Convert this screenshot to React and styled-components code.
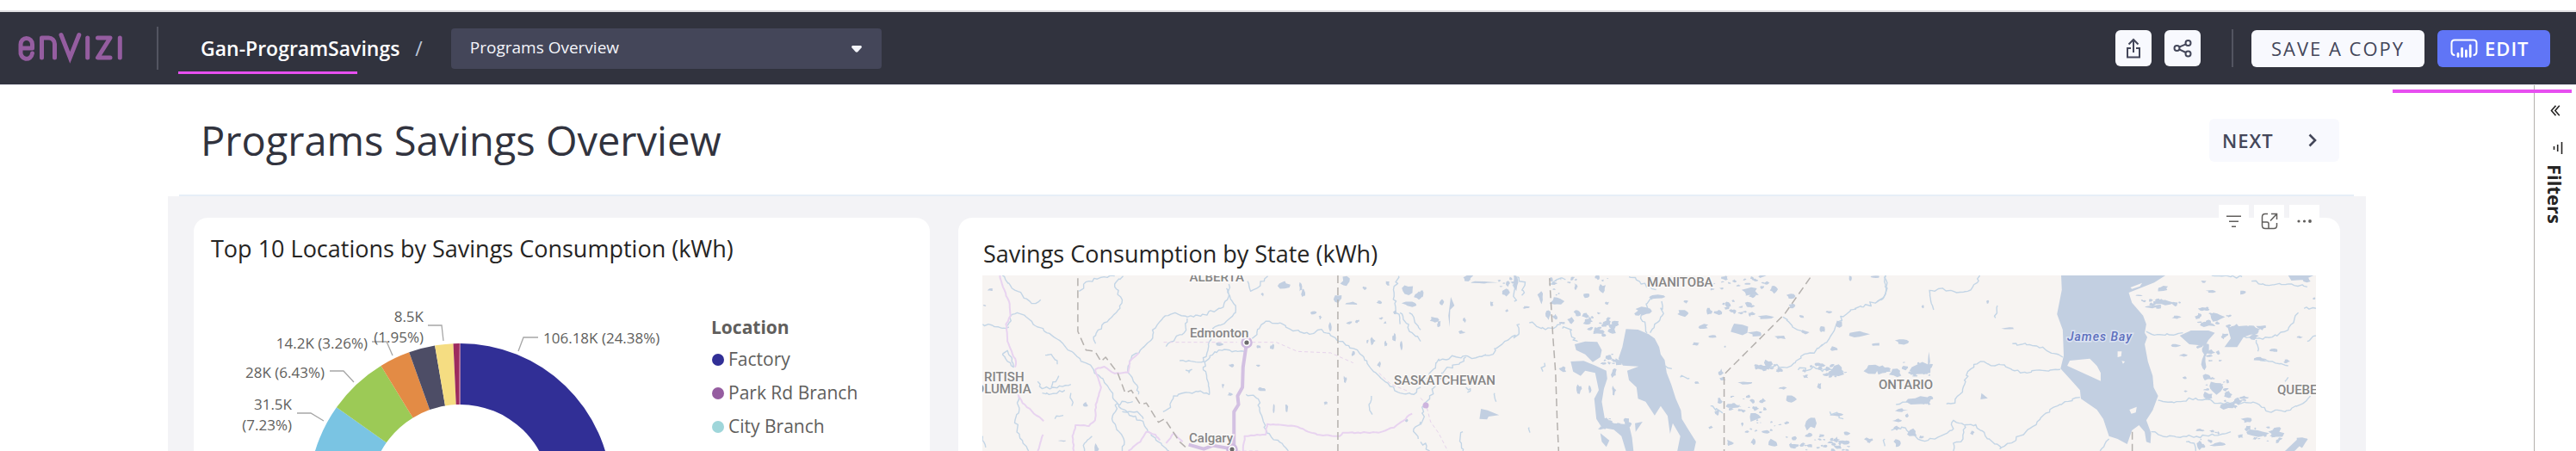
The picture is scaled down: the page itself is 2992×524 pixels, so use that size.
import React from "react";
import styled, { createGlobalStyle } from "styled-components";

const GlobalStyle = createGlobalStyle`
  *, *::before, *::after { box-sizing: border-box; }
  body { margin: 0; background: #fff; font-family: "Open Sans", "Noto Sans", sans-serif; }
  button, select { font-family: inherit; }
  h1, h2, h3, ul { margin: 0; padding: 0; font-weight: 400; }
`;

/* ---------- shell ---------- */

const Page = styled.div`
  height: 100vh;
  display: flex;
  flex-direction: column;
  overflow: hidden;
  padding-top: 12px;
`;

const Header = styled.header`
  position: relative;
  flex: none;
  display: flex;
  align-items: center;
  height: 87px;
  padding: 0 30px 0 20px;
  background: #31333e;
  border-top: 2px solid #e0e0e2;
  border-bottom: 1px solid #dcdde6;
`;

const Highlight = styled.span`
  position: absolute;
  height: 4px;
  background: #e74ff0;
  pointer-events: none;
`;

const TitleHighlight = styled(Highlight)`
  left: 207px;
  bottom: 12px;
  width: 208px;
  height: 3px;
`;

const PaneHighlight = styled(Highlight)`
  top: 5px;
  right: 5px;
  width: 208px;
`;

const Separator = styled.span`
  width: 2px;
  height: ${(p) => p.$height}px;
  background: #535561;
`;

const Crumbs = styled.nav`
  display: flex;
  align-items: center;
  gap: 18px;
  margin: 0 33px 0 49px;
  font-size: 23px;
  font-weight: 600;
  line-height: 32px;
`;

const CrumbLink = styled.a`
  color: #fff;
  text-decoration: none;
`;

const Slash = styled.span`
  color: #bcc5d8;
  font-weight: 400;
`;

const LogoBox = styled.a`
  display: flex;
  margin-right: 38px;
`;

const PickerBox = styled.div`
  position: relative;
  width: 500px;
`;

const Picker = styled.select`
  appearance: none;
  width: 100%;
  height: 47px;
  padding: 0 40px 2px 22px;
  border: 0;
  border-radius: 4px;
  background: #444659;
  color: #f4f5fb;
  font-size: 19px;
`;

const PickerCaret = styled.svg`
  position: absolute;
  right: 23px;
  top: 20px;
  pointer-events: none;
`;

const Actions = styled.div`
  display: flex;
  align-items: center;
  gap: 15px;
  margin-left: auto;
`;

const ActionDivider = styled.div`
  display: flex;
  padding: 0 6px 0 21px;
`;

const Button = styled.button`
  display: flex;
  align-items: center;
  justify-content: center;
  padding: 0;
  border: 0;
  border-radius: 6px;
  background: #f8f9fe;
  color: #44475a;
  font-size: 22px;
  letter-spacing: 1px;
`;

const IconButton = styled(Button)`
  width: 42px;
  height: 42px;
`;

const SaveButton = styled(Button)`
  width: 201px;
  height: 43px;
  font-weight: 500;
  letter-spacing: 2px;
`;

const EditButton = styled(Button)`
  justify-content: flex-start;
  gap: 8px;
  width: 131px;
  height: 43px;
  padding-left: 15px;
  background: #6075f6;
  color: #fff;
  font-weight: 600;
`;

const Workspace = styled.div`
  position: relative;
  flex: 1;
  min-height: 0;
  display: flex;
`;

const Report = styled.main`
  flex: 1;
  min-width: 0;
  display: flex;
  flex-direction: column;
  margin: 0 195px;
`;

const TitleRow = styled.div`
  flex: none;
  display: flex;
  align-items: center;
  justify-content: space-between;
  height: 129px;
  margin: 0 14px 0 13px;
  padding: 0 17px 0 25px;
  border-bottom: 2px solid #e6eef7;
`;

const PageTitle = styled.h1`
  color: #31333e;
  font-size: 47px;
  line-height: 64px;
`;

const NextButton = styled(Button)`
  justify-content: space-between;
  width: 151px;
  height: 50px;
  padding: 0 26px 0 15px;
  font-weight: 600;
`;

const Board = styled.div`
  flex: 1;
  min-height: 0;
  display: grid;
  grid-template-columns: minmax(0, 855fr) minmax(0, 1605fr);
  gap: 33px;
  padding: 25px 30px 0;
  background: #f3f3f6;
`;

const Card = styled.section`
  position: relative;
  display: flex;
  flex-direction: column;
  min-height: 0;
  background: #fff;
  border-radius: 16px 16px 0 0;
`;

const CardTitle = styled.h2`
  padding: ${(p) => (p.$low ? "24px 29px 7px" : "18px 20px 13px")};
  color: #252423;
  font-size: 27px;
  line-height: 36px;
`;

const ChartBody = styled.div`
  flex: 1;
  min-height: 0;
  display: flex;
  overflow: hidden;
`;

const Donut = styled.svg`
  flex: none;
  width: 601px;
  height: 450px;
  font-size: 17px;
  fill: #605e5c;
`;

const Legend = styled.div`
  padding-top: 42px;
  color: #605e5c;
  font-size: 21px;
`;

const LegendTitle = styled.h3`
  font-size: 21px;
  font-weight: 700;
  line-height: 36px;
`;

const LegendItem = styled.li`
  display: flex;
  align-items: center;
  gap: 5px;
  line-height: 39px;
`;

const Dot = styled.span`
  width: 14px;
  height: 14px;
  margin-left: 1px;
  border-radius: 50%;
  background: ${(p) => p.$color};
`;

const VisualTools = styled.div`
  position: absolute;
  top: -15px;
  right: 24px;
  display: flex;
  gap: 6px;
`;

const VisualTool = styled.button`
  display: flex;
  align-items: center;
  justify-content: center;
  width: 35px;
  height: 37px;
  padding: 0;
  border: 0;
  background: #fff;
  color: #605e5c;
`;

const MapFrame = styled.div`
  flex: 1;
  min-height: 0;
  margin: 0 28px;
  overflow: hidden;
  background: #f7f4f2;
`;

const MapSvg = styled.svg`
  display: block;
  width: 100%;
  height: 100%;
  font-family: Roboto, sans-serif;
  font-size: 15px;
  font-weight: 500;
`;

const FilterPane = styled.aside`
  display: flex;
  flex-direction: column;
  align-items: center;
  width: 49px;
  padding-top: 16px;
  border-left: 1px solid #b3b0ad;
  color: #252423;
`;

const PaneButton = styled.button`
  display: flex;
  justify-content: center;
  padding: 7px 0;
  border: 0;
  background: none;
  color: inherit;
`;

const PaneIcon = styled.div`
  display: flex;
  padding: 23px 0 12px 6px;
`;

const PaneTitle = styled.h2`
  writing-mode: vertical-rl;
  font-size: 22px;
  font-weight: 700;
  line-height: 30px;
`;

/* ---------- icons ---------- */

const Logo = () => (
  <svg width="124" height="38" viewBox="0 0 124 38" fill="none" stroke="#955da0" strokeWidth="5" strokeLinecap="round" role="img" aria-label="envizi">
    <path d="M4 19H17.5V14.5a6.75 7 0 0 0-13.5 0V22.5a6.75 7.5 0 0 0 13.5 2.5" strokeLinejoin="round" />
    <path d="M28.5 30V7H36.5a7 7 0 0 1 7 7V30" strokeLinejoin="round" />
    <path d="M51 3.500L61.300 30L71.800 3.500" strokeMiterlimit="8" />
    <path d="M81.700 7V30M119.300 7V30" />
    <path d="M93.500 7H108L93.500 30H108" strokeLinejoin="round" />
  </svg>
);

const ExportIcon = () => (
  <svg width="16" height="24" viewBox="0 0 16 24" fill="none" stroke="currentColor" strokeWidth="2">
    <path d="M8 17V2M2.500 7.500L8 2l5.500 5.500M5 12H1v10.500h14V12h-4" />
  </svg>
);

const ShareIcon = () => (
  <svg width="22" height="22" viewBox="0 0 22 22" fill="none" stroke="currentColor" strokeWidth="2">
    <circle cx="4.500" cy="11" r="3" />
    <circle cx="17.500" cy="5" r="3" />
    <circle cx="17.500" cy="17.500" r="3" />
    <path d="M7.200 9.700L14.800 6.300M7.200 12.300L14.800 16" />
  </svg>
);

const ReportIcon = () => (
  <svg width="32" height="24" viewBox="0 0 32 24" fill="none" stroke="currentColor" strokeLinecap="round">
    <path strokeWidth="2" d="M4.500 20Q1.500 19.500 1.500 16V6Q1.500 2.500 5 2.500H27Q30.500 2.500 30.500 6V16Q30.500 19.500 27.500 20" />
    <path strokeWidth="2.800" d="M9 18.500V21.500M13.600 12.500V21.500M18.400 15V21.500M23.200 9V21.500" />
  </svg>
);

const ChevronIcon = () => (
  <svg width="10" height="16" viewBox="0 0 10 16" fill="none" stroke="currentColor" strokeWidth="2.600">
    <path d="M1.500 1.500L8 8L1.500 14.500" />
  </svg>
);

const FilterLinesIcon = () => (
  <svg width="19" height="14" viewBox="0 0 19 14" stroke="currentColor" strokeWidth="1.500">
    <path d="M1 1.200H18M4 7.200H15M7 13.200H12" />
  </svg>
);

const FocusIcon = () => (
  <svg width="20" height="20" viewBox="0 0 20 20" fill="none" stroke="currentColor" strokeWidth="1.500">
    <path d="M8 1.500H5Q1.500 1.500 1.500 5V15Q1.500 18.500 5 18.500H15Q18.500 18.500 18.500 15V12M1.500 11H7Q9 11 9 13V18.500M11 9.500L18 2M12 1.500H18.500V8" />
  </svg>
);

const DotsIcon = () => (
  <svg width="17" height="4" viewBox="0 0 17 4" fill="currentColor">
    <circle cx="2" cy="2" r="1.600" />
    <circle cx="8.500" cy="2" r="1.600" />
    <circle cx="15" cy="2" r="1.900" />
  </svg>
);

const CollapseIcon = () => (
  <svg width="12" height="13" viewBox="0 0 12 13" fill="none" stroke="currentColor" strokeWidth="1.600">
    <path d="M6.500 .8L1.500 6.500L6.500 12.200M10.800 .8L5.800 6.500L10.800 12.200" />
  </svg>
);

const SideFilterIcon = () => (
  <svg width="12" height="14" viewBox="0 0 12 14" stroke="currentColor" strokeWidth="1.600">
    <path d="M1.500 5V9M5.700 3V11M10.500 0V14" />
  </svg>
);

/* ---------- donut ---------- */

const SLICES = [
  [0, 87.8, "#312f96"],
  [87.8, 180, "#955da0"],
  [180, 280.5, "#9fd6da"],
  [280.5, 305.3, "#7ac4e3"],
  [305.3, 328.5, "#9cca56"],
  [328.5, 340.3, "#e38b45"],
  [340.3, 350.4, "#4d4d66"],
  [350.4, 357.4, "#f5dd82"],
  [357.4, 359.5, "#9d2b5e"],
  [359.5, 360, "#b25080"],
];

const arc = (from, to) => {
  const pt = (deg, r) => {
    const a = ((deg - 90) * Math.PI) / 180;
    return `${(309.5 + r * Math.cos(a)).toFixed(1)} ${(255 + r * Math.sin(a)).toFixed(1)}`;
  };
  return `M${pt(from, 176)}A176 176 0 0 1 ${pt(to, 176)}L${pt(to, 105)}A105 105 0 0 0 ${pt(from, 105)}Z`;
};

const CALLOUTS = [
  ["8.5K", 267, 54, "end"],
  ["(1.95%)", 267, 78, "end"],
  ["14.2K (3.26%)", 202, 85, "end"],
  ["28K (6.43%)", 152, 119, "end"],
  ["31.5K", 114, 156, "end"],
  ["(7.23%)", 114, 180, "end"],
  ["106.18K (24.38%)", 406, 79, "start"],
];

const LEADERS =
  "M272 58H288L290 76M207 77H224L231 93M158 111H174L186 124M120 160H136L151 169M400 72H383L377 88";

/* ---------- map ---------- */

const random = (seed) => () => {
  seed = (seed * 16807) % 2147483647;
  return seed / 2147483647;
};

const blob = (x, y, w, h, rnd) => {
  const n = 9;
  let d = "";
  for (let i = 0; i < n; i++) {
    const a = (i / n) * Math.PI * 2;
    const r = 0.45 + rnd() * 0.75;
    d += `${i ? "L" : "M"}${(x + (Math.cos(a) * w * r) / 2).toFixed(1)} ${(y + (Math.sin(a) * h * r) / 2).toFixed(1)}`;
  }
  return d + "Z";
};

const lakes = (list, seed) => {
  const rnd = random(seed);
  return list.map(([x, y, w, h]) => blob(x, y, w, h, rnd)).join("");
};

const scatter = (areas, seed) => {
  const rnd = random(seed);
  let d = "";
  areas.forEach(([x, y, w, h, count, size]) => {
    for (let i = 0; i < count; i++) {
      const s = size * (0.4 + rnd());
      d += blob(x + rnd() * w, y + rnd() * h, s, s * (0.4 + rnd() * 0.6), rnd);
    }
  });
  return d;
};

const wiggle = (points, seed, amount = 5) => {
  const rnd = random(seed);
  return points
    .map((line) => {
      const p = line.split(" ").map((s) => s.split(",").map(Number));
      let d = `M${p[0]}`;
      for (let i = 1; i < p.length; i++) {
        const [ax, ay] = p[i - 1];
        const [bx, by] = p[i];
        const steps = Math.max(1, Math.round(Math.hypot(bx - ax, by - ay) / 10));
        for (let k = 1; k <= steps; k++) {
          const j = k === steps ? 0 : amount;
          const t = k / steps;
          d += `L${(ax + (bx - ax) * t + (rnd() - 0.5) * 2 * j).toFixed(1)} ${(ay + (by - ay) * t + (rnd() - 0.5) * 2 * j).toFixed(1)}`;
        }
      }
      return d;
    })
    .join("");
};

const WEST = {
  transform: "translate(-41 -100) scale(.3508 .3333)",
  rivers: wiggle([
    "118,470 150,474 185,484 205,480",
    "200,475 215,436 232,430 262,445 290,474 330,500 365,522 400,560 440,590 485,628 520,670 560,740 600,780 640,805 665,845 700,880 735,912",
    "183,300 215,345 250,370 280,398 310,385",
    "437,355 470,320 520,305 555,302",
    "583,302 555,330 565,365 580,385 560,430 520,465 500,490 485,515 492,538",
    "933,330 928,385 905,415 840,442 795,445 755,430 715,448 680,490 676,525 640,560 612,580 600,640 632,690 634,715",
    "925,345 950,400 955,430 925,460 880,485 865,540 850,600 770,597",
    "795,450 785,500 755,520 725,548",
    "985,565 900,560 870,580 848,620 862,665 868,715 830,705 790,708 750,720 740,760 715,775",
    "1010,520 1055,460 1100,466 1140,490 1200,505 1240,488 1290,525 1330,545 1380,585 1400,620 1450,670 1500,710 1545,715 1568,690",
    "990,715 1030,730 1045,800 1060,850 1100,880 1130,912",
    "237,720 237,780 225,805 240,860 270,912",
    "565,745 548,790 560,830 585,870 580,912",
    "1062,302 1050,320 1005,355 995,320",
    "1495,302 1480,360 1485,410 1500,470",
    "183,575 200,562 215,590 220,620 200,600 183,575",
    "325,578 345,575 365,610",
    "300,670 315,695 350,690 410,680",
    "315,710 350,712 390,700",
    "345,690 370,650",
    "410,710 413,755",
    "565,750 590,740 615,740",
    "580,775 630,775 650,800",
    "357,800 362,790 385,788",
    "1405,720 1397,750 1408,785",
    "1500,430 1540,500 1568,530",
    "1530,430 1568,490",
    "1568,810 1545,835 1560,870",
    "480,860 455,885 455,912",
    "118,860 128,900",
    "790,630 810,628 800,640",
  ], 7),
  lakes: lakes([
    [145,350,22,12],[125,405,14,6],[458,750,22,18],[383,877,30,6],[495,905,14,40],[1115,332,42,28],[1170,340,10,32],[1180,360,14,30],[1045,366,14,14],
    [1320,322,34,34],[1292,380,32,30],[1340,398,40,12],[1382,345,14,14],[1457,328,18,20],[1432,393,22,12],[1525,350,50,42],[1560,370,30,34],[1535,400,60,18],[1215,430,26,14],[1236,446,12,14],[1267,480,12,30],[1332,465,20,12],[1358,460,14,14],[1437,450,14,10],[1480,518,12,36],[1504,548,12,34],[1452,538,10,20],[1410,528,16,30],[1392,530,8,18],[1432,610,16,20],[1345,572,14,20],
    [1078,550,18,30],[1032,548,14,14],[900,540,28,12],[942,614,20,14],[1030,614,14,10],[1043,697,28,16],[937,715,18,16],[913,684,10,18],[1082,765,8,30],[1124,768,14,36],[1254,746,14,12],[1318,662,16,24],[1520,805,12,12],[1482,430,10,16],[1450,465,12,10],
  ], 11),
  roads: wiggle([
    "175,300 185,340 205,390 210,440 195,470 200,530 228,600 225,620",
    "235,715 250,745 320,808",
    "490,628 520,618 555,642 600,638 605,600 635,570",
    "490,628 510,690 492,750 490,805 470,825 425,822 415,860 420,912",
    "300,912 318,855",
    "600,912 640,880 660,845 690,855 705,875",
    "725,885 750,850 780,880",
    "980,912 985,860 1055,855 1060,818 1150,825 1225,855 1300,860 1310,848 1430,848 1480,830 1540,782",
  ], 23, 2),
  minorRoads: "M717 533H960M1010 533H1090L1160 565L1270 570L1345 605M1430 640L1470 680L1530 705M960 912H1030",
  highways: "M992 535L980 620L978 690L962 720L965 750L950 775V912M800 890L850 905L880 893L945 905",
  borders: "M433 310V495L460 560L490 565L510 600L525 585L565 640L590 710L610 700L640 750L660 745L700 812L720 800L770 880L800 908M1294 300V912",
};

const CENTRAL = {
  transform: "translate(509 -20) scale(.3508 .3333)",
  rivers: wiggle([
    "328,230 325,265 290,285 245,315 240,335 170,350 150,340 60,352 45,385 20,420",
    "150,345 130,365 90,380 70,400 50,445 30,480 15,510 5,540 5,570 0,580",
    "1540,60 1540,120 1520,145 1460,170 1410,195 1385,220 1365,260 1340,295 1290,330 1240,365 1200,380 1150,375",
    "470,245 500,250 505,285 520,290",
    "360,225 400,245 440,245 465,230",
    "798,150 800,200 775,230 760,260",
    "775,130 740,180 735,220 750,260",
    "1200,205 1230,235 1275,260",
    "310,60 310,150", "405,395 410,365", "245,470 250,500", "360,590 362,608", "140,605 135,645 140,672",
    "810,375 832,385", "860,415 890,418", "960,515 1000,540", "150,450 165,455 155,468",
    "0,640 20,655 30,672", "1355,535 1400,560", "1250,390 1310,385 1400,395",
    "425,90 450,75 480,75", "320,65 345,95 335,130", "780,110 730,90 690,65",
  ], 31, 8),
  lakes:
    "M680 247L720 249L755 265L775 280L790 310L795 335L808 355L815 400L830 440L845 490L862 530L865 560L885 595L912 640L905 672H850L860 620L835 575L826 612L818 550L795 515L775 548L745 500L720 490L715 450L690 425L684 392L722 377L670 374L655 350L668 310Z" +
    "M510 300L545 290L585 292L600 320L595 345L570 362L545 335L515 320Z" +
    "M497 360L540 358L580 375L615 392L618 420L607 455L600 500L610 560L640 575L690 580L700 625L705 672H680L665 620L640 598L600 590L582 560L575 490L590 460L578 400L545 392L530 410L505 395Z" +
    "M595 610L625 635L615 658L600 640Z M200 525L222 530L260 547L225 552L220 562L195 560Z M100 135L112 165L98 180L96 240L92 200Z M710 575L735 570L712 605Z" +
    lakes([
      [155,70,44,26],[205,85,90,10],[5,125,18,26],[70,152,16,22],[45,215,34,22],[60,228,14,26],[145,215,10,18],[135,258,24,16],[235,158,14,16],[285,183,10,10],[282,120,24,34],[315,85,20,50],[398,135,22,46],[450,150,44,40],[552,128,28,22],[602,105,24,30],[618,157,14,12],[515,100,14,20],[520,192,30,30],[498,218,24,26],[350,172,28,10],[422,198,22,34],[445,205,18,24],[470,388,28,22],[525,455,20,34],[560,460,10,36],[640,400,20,34],[640,460,14,32],[745,185,60,40],[720,190,30,20],[780,135,60,16],[878,152,20,14],[870,192,54,22],[955,185,22,26],[985,188,28,18],[935,238,42,18],[965,272,36,12],[912,300,28,14],[1008,308,10,8],[1090,115,70,36],[1168,108,26,28],[1225,132,34,26],[1230,165,30,22],[1140,205,60,16],[1262,204,22,12],[1060,250,80,46],[1110,264,50,24],[1190,275,40,18],[1272,258,32,18],[1330,248,18,24],[1385,228,24,24],[1450,265,66,30],[1505,300,34,12],[1370,315,30,18],[1350,187,24,10],[1505,65,28,10],[1422,70,12,18],[1380,390,50,40],[1500,388,60,30],[1545,390,36,20],[1320,445,14,26],[1200,452,28,12],[1150,370,30,34],[1225,492,40,26],[990,500,18,26],[982,540,16,24],[994,400,18,26],[1000,420,24,14],[1080,435,56,12],[1030,515,50,16],[1105,555,40,30],[1290,575,36,50],[1380,545,50,14],[1170,645,40,34],[1235,655,40,16],[1145,605,34,12],[1210,575,20,14],[1410,610,22,12],[1395,640,40,12],[1485,635,30,20],[960,590,14,12],[1025,645,34,26],[1065,580,10,14],[470,225,20,10],[1100,640,18,26],[915,434,18,8],
    ], 47) +
    scatter([[545,190,105,80,26,24],[600,330,55,50,10,22],[1000,120,100,90,20,20],[960,60,190,50,18,18],[250,70,60,30,7,16],[560,60,60,40,6,14],[1020,480,120,60,18,16],[1060,560,130,50,10,14],[1180,610,250,60,28,18],[1270,370,140,50,16,18],[400,70,80,60,9,14],[600,560,100,40,12,22],[1110,370,110,25,10,20],[480,60,60,40,5,12]], 59),
  roads: "",
  minorRoads: "M0 487L18 510L33 570L60 610L90 672",
  highways: "",
  borders: "M427 70L438 270L447 400L452 560L457 672M1290 68L1205 195L1005 405V672",
};

const EAST = {
  transform: "translate(1039 -100) scale(.3703 .3333)",
  rivers: wiggle([
    "323,300 315,325 285,355 250,360 210,348 165,352 168,380 178,420",
    "28,300 28,360 15,385 0,392",
    "218,748 245,745 260,715 275,680 285,635 325,600 370,615 400,612 450,640 510,630 575,628",
    "425,538 470,542 520,550 555,572 583,585",
    "637,725 590,740 530,780 500,820 460,855 415,885 385,905",
    "45,840 90,832 120,860 150,878 200,860 235,840 240,805 275,822 310,820 340,860 390,902",
    "275,825 270,870 240,885 240,912", "845,495 870,508 930,508 960,500",
    "882,735 940,740 1000,728 1080,745 1190,745 1220,772 1280,775 1330,750 1360,720",
    "860,845 900,862 970,862 1040,860 1110,845", "970,880 995,885 1000,912",
    "1110,500 1180,520 1240,515 1290,490 1310,450 1322,430", "1050,300 1110,305 1145,305",
    "1175,320 1230,335 1300,330 1350,340", "1377,415 1340,415", "1377,510 1350,530", "1185,590 1240,600 1290,615",
    "25,870 25,895", "378,405 372,448", "700,912 728,870", "60,750 80,742 100,735", "1280,670 1290,655", "1190,525 1195,565",
  ], 67, 5),
  lakes:
    "M578 300H905L870 325L790 360L800 395L835 440L845 470L840 500L848 515L840 540L850 600L865 650L868 690L882 720L865 770L845 805L860 850L858 885L845 880L840 845L822 822L800 840L785 888L755 870L728 860L710 800L690 768L640 730L637 700L605 660L576 625L586 580L583 490L565 435L580 350Z" +
    "M328 710L348 728L325 732Z M950 510L985 492L1040 492L1060 500L1040 525L1030 545L980 540Z M1100 480L1160 475L1200 495L1150 515L1130 550L1090 550L1110 520Z M1290 300H1370L1340 315L1300 318Z M1280 912L1320 870L1350 868L1310 912Z" +
    lakes([
      [145,408,10,14],[348,392,10,12],[413,484,46,8],[80,530,54,22],[15,628,36,36],[60,640,40,28],[135,625,80,44],[163,600,8,80],[130,735,80,30],[75,770,40,12],[65,805,30,12],[95,790,12,16],[60,832,24,16],[110,850,40,30],[300,848,14,16],[65,885,24,30],[140,865,14,14],
      [895,345,44,20],[820,370,30,8],[900,395,60,22],[860,410,60,12],[1025,322,20,8],[1050,355,40,10],[1147,360,24,14],[940,446,28,12],[1018,418,30,16],[1065,445,46,40],[1040,470,50,20],[935,544,34,12],[960,578,28,10],[1028,560,30,50],[1026,600,18,60],[1060,690,56,50],[1040,720,40,30],[965,657,20,10],[968,704,12,8],[1100,755,50,30],[1150,725,34,12],[1245,562,28,14],[1200,592,40,20],[1285,600,20,14],[1325,515,20,14],[1372,380,10,12],[1160,805,34,22],[1190,850,80,28],[1250,850,50,34],[1010,840,30,10],[1010,890,20,40],[1330,885,50,40],[1070,890,60,16],[1140,860,20,16],[1345,315,40,20],
    ], 71) +
    scatter([[820,360,140,50,10,18],[1000,410,110,60,10,20],[1080,470,130,50,12,24],[1010,540,70,60,9,18],[1030,640,80,80,14,20],[80,600,90,50,12,16],[1080,730,70,30,8,18],[1150,830,130,50,18,18],[1000,840,140,60,10,14],[80,720,90,30,8,16]], 83),
  roads: "",
  minorRoads: "",
  highways: "",
  borders: "M801 845V912",
};

const ISLANDS =
  "M605 597L668 590L690 615L702 640V668L597 615Z M755 565L768 565L766 582L755 585Z M768 598L778 600L772 608Z M792 768L815 758L812 778L798 782Z M795 342L832 326L825 338L800 347Z";

const LABELS = [
  ["ALBERTA", 240.500, 7],
  ["Edmonton", 241, 72],
  ["RITISH", 2, 123],
  ["COLUMBIA", -18, 137],
  ["Calgary", 240, 194],
  ["SASKATCHEWAN", 478, 127],
  ["MANITOBA", 772, 13],
  ["ONTARIO", 1041, 132],
  ["QUEBEC", 1504, 138],
];

const line = { fill: "none", vectorEffect: "non-scaling-stroke", strokeLinejoin: "round" };

function MapTile({ tile }) {
  return (
    <g transform={tile.transform}>
      <path {...line} d={tile.rivers} stroke="#c3d5e6" strokeWidth="1.400" />
      <path d={tile.lakes} fill="#c2cfe1" />
      <path {...line} d={tile.roads} stroke="#e8d3f0" strokeWidth="2" />
      <path {...line} d={tile.minorRoads} stroke="#e6d3ec" strokeWidth="1" strokeDasharray="4 3" />
      <path {...line} d={tile.highways} stroke="#d3c0e2" strokeWidth="4" />
      <path {...line} d={tile.borders} stroke="#b5b1ae" strokeWidth="1.500" strokeDasharray="9 5" />
    </g>
  );
}

function StateMap() {
  return (
    <MapSvg viewBox="0 0 1549 204" preserveAspectRatio="xMidYMin slice" role="img" aria-label="Map of savings consumption by state">
      <MapTile tile={WEST} />
      <MapTile tile={CENTRAL} />
      <MapTile tile={EAST} />
      <path d={ISLANDS} fill="#f7f4f2" transform={EAST.transform} />
      <circle cx="515" cy="151" r="3.500" fill="#cdb4de" />
      {[[307, 78], [290, 202]].map(([x, y]) => (
        <g key={x}>
          <circle cx={x} cy={y} r="5.500" fill="#fff" stroke="#cdb9df" strokeWidth="2.500" />
          <circle cx={x} cy={y} r="2.600" fill="#6b6b6b" />
        </g>
      ))}
      <g fill="#858585" stroke="#faf8f7" strokeWidth="3" paintOrder="stroke">
        {LABELS.map(([text, x, y]) => (
          <text key={text} x={x} y={y}>{text}</text>
        ))}
      </g>
      <text x="1260" y="76" fontSize="14" fontStyle="italic" letterSpacing="1" fill="#5d70bd" stroke="#dbe2f2" strokeWidth="3" paintOrder="stroke">
        James Bay
      </text>
    </MapSvg>
  );
}

/* ---------- page ---------- */

const LOCATIONS = [
  ["Factory", "#312f96"],
  ["Park Rd Branch", "#955da0"],
  ["City Branch", "#9fd6da"],
];

export default function App() {
  return (
    <Page>
      <GlobalStyle />
      <Header>
        <LogoBox href="#home"><Logo /></LogoBox>
        <Separator $height={50} />
        <Crumbs aria-label="Breadcrumb">
          <CrumbLink href="#report">Gan-ProgramSavings</CrumbLink>
          <Slash>/</Slash>
        </Crumbs>
        <PickerBox>
          <Picker aria-label="Report page" defaultValue="Programs Overview">
            <option>Programs Overview</option>
          </Picker>
          <PickerCaret width="12" height="8" viewBox="0 0 12 8" fill="#f4f5fb">
            <path d="M1 0H11Q12.500 1 11.500 2.500L7.500 7Q6 8.300 4.500 7L.5 2.500Q-.5 1 1 0Z" />
          </PickerCaret>
        </PickerBox>
        <Actions>
          <IconButton aria-label="Export"><ExportIcon /></IconButton>
          <IconButton aria-label="Share"><ShareIcon /></IconButton>
          <ActionDivider><Separator $height={44} /></ActionDivider>
          <SaveButton>SAVE A COPY</SaveButton>
          <EditButton><ReportIcon />EDIT</EditButton>
        </Actions>
        <TitleHighlight />
      </Header>

      <Workspace>
        <Report>
          <TitleRow>
            <PageTitle>Programs Savings Overview</PageTitle>
            <NextButton>NEXT<ChevronIcon /></NextButton>
          </TitleRow>
          <Board>
            <Card>
              <CardTitle>Top 10 Locations by Savings Consumption (kWh)</CardTitle>
              <ChartBody>
                <Donut viewBox="0 0 601 450" role="img" aria-label="Savings consumption by location">
                  {SLICES.map(([from, to, color]) => (
                    <path key={from} d={arc(from, to)} fill={color} />
                  ))}
                  <path d={LEADERS} fill="none" stroke="#a6a6a6" strokeWidth="1.300" />
                  {CALLOUTS.map(([text, x, y, anchor]) => (
                    <text key={text} x={x} y={y} textAnchor={anchor}>{text}</text>
                  ))}
                </Donut>
                <Legend>
                  <LegendTitle>Location</LegendTitle>
                  <ul>
                    {LOCATIONS.map(([name, color]) => (
                      <LegendItem key={name}><Dot $color={color} />{name}</LegendItem>
                    ))}
                  </ul>
                </Legend>
              </ChartBody>
            </Card>
            <Card>
              <CardTitle $low>Savings Consumption by State (kWh)</CardTitle>
              <MapFrame><StateMap /></MapFrame>
              <VisualTools>
                <VisualTool aria-label="Filters on this visual"><FilterLinesIcon /></VisualTool>
                <VisualTool aria-label="Focus mode"><FocusIcon /></VisualTool>
                <VisualTool aria-label="More options"><DotsIcon /></VisualTool>
              </VisualTools>
            </Card>
          </Board>
        </Report>
        <FilterPane>
          <PaneButton aria-label="Expand filters"><CollapseIcon /></PaneButton>
          <PaneIcon><SideFilterIcon /></PaneIcon>
          <PaneTitle>Filters</PaneTitle>
        </FilterPane>
        <PaneHighlight />
      </Workspace>
    </Page>
  );
}
